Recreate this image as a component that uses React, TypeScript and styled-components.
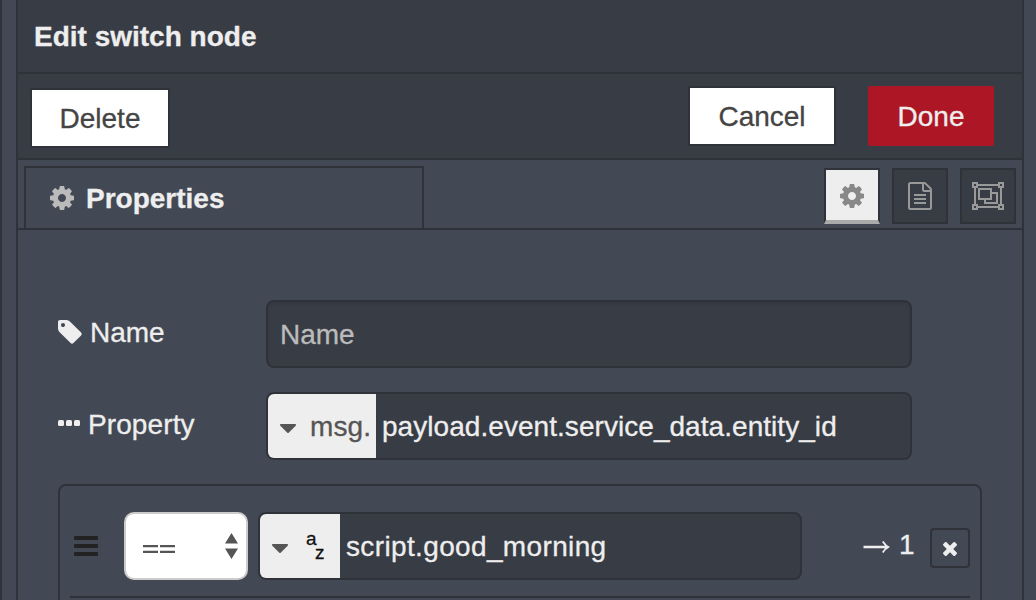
import React from "react";
import styled, { createGlobalStyle } from "styled-components";

const c = {
  dark: "#383c45",
  body: "#434954",
  line: "#2f3239",
  text: "#eeeeee",
  light: "#eeeeee",
  grey: "#555555",
};

const Global = createGlobalStyle`
  * { box-sizing: border-box; }
  html, body { margin: 0; padding: 0; overflow: hidden; }
  body, input, button {
    font-family: "Liberation Sans", Arial, sans-serif;
    font-size: 28px;
    line-height: 40px;
    color: ${c.text};
    -webkit-text-stroke: 0.3px currentColor;
  }
`;

const Page = styled.div`
  display: flex;
  width: 1036px;
  height: 600px;
  overflow: hidden;
  background: ${c.body};
  border-left: 2px solid ${c.line};
  padding-left: 14px;
`;

const Tray = styled.section`
  width: 1008px;
  height: 600px;
  border: solid ${c.line};
  border-width: 0 2px;
  display: flex;
  flex-direction: column;
`;

const Header = styled.header`
  height: 74px;
  flex: none;
  background: ${c.dark};
  border-bottom: 2px solid ${c.line};
  padding: 17px 0 0 16px;
  font-weight: bold;
`;

const Toolbar = styled.div`
  height: 86px;
  flex: none;
  display: flex;
  background: ${c.dark};
  border-bottom: 2px solid ${c.line};
  padding: 12px 28px 0 12px;
`;

const Button = styled.button<{ $w: number; $primary?: boolean; $top?: number }>`
  width: ${(p) => p.$w}px;
  height: 60px;
  flex: none;
  margin: ${(p) => p.$top ?? 0}px 0 0;
  padding: 2px 0 0;
  border: 2px solid ${(p) => (p.$primary ? "#ad1625" : c.line)};
  border-radius: 2px;
  background: ${(p) => (p.$primary ? "#ad1625" : "#ffffff")};
  color: ${(p) => (p.$primary ? c.text : "#444444")};
`;

const Spacer = styled.div`
  flex: 1;
`;

const Gap = styled.div`
  width: 32px;
`;

const TabBar = styled.div`
  height: 70px;
  flex: none;
  display: flex;
  border-bottom: 2px solid ${c.line};
  padding: 6px 6px 0;
`;

const Tab = styled.div`
  width: 400px;
  border: 2px solid ${c.line};
  border-bottom: 0;
  display: flex;
  align-items: center;
  padding: 0 0 0 24px;
  gap: 12px;
  font-weight: bold;
`;

const TabIcons = styled.div`
  display: flex;
  gap: 12px;
  margin: 2px 0 0 auto;
`;

const TabIcon = styled.button<{ $active?: boolean }>`
  width: 56px;
  height: 56px;
  padding: 0;
  display: flex;
  align-items: center;
  justify-content: center;
  color: ${(p) => (p.$active ? "#888888" : "#999999")};
  background: ${(p) => (p.$active ? c.light : c.dark)};
  border: 2px solid ${c.line};
  ${(p) => p.$active && "border-bottom: 4px solid #aaaaaa; padding-top: 2px;"}
`;

const Form = styled.div`
  padding: 70px 40px 0;
  flex: 1;
`;

const Row = styled.div`
  display: flex;
  height: 68px;
  margin-bottom: 24px;
`;

const Label = styled.label`
  width: 208px;
  height: 64px;
  display: flex;
  align-items: center;
  gap: 8px;
`;

const Text = styled.span<{ $spacing?: number }>`
  padding-top: 2px;
  letter-spacing: ${(p) => p.$spacing ?? 0}px;
  white-space: nowrap;
`;

const NameInput = styled.input`
  width: 646px;
  height: 68px;
  padding: 2px 12px 0;
  background: ${c.dark};
  border: 2px solid ${c.line};
  border-radius: 8px;
  box-shadow: inset 0 2px 2px rgba(0, 0, 0, 0.075);
  outline: none;
  &::placeholder { color: #bbbbbb; opacity: 1; }
`;

const TypedInput = styled.div<{ $w: number }>`
  width: ${(p) => p.$w}px;
  height: 68px;
  display: flex;
  align-items: center;
  gap: 6px;
  overflow: hidden;
  background: ${c.dark};
  border: 2px solid ${c.line};
  border-radius: 8px;
`;

const TypeSelect = styled.div<{ $w: number }>`
  width: ${(p) => p.$w}px;
  height: 64px;
  flex: none;
  display: flex;
  align-items: center;
  gap: 14px;
  padding-left: 12px;
  background: ${c.light};
  color: ${c.grey};
`;

const AzIcon = styled.span`
  display: flex;
  margin-left: 4px;
  color: #111111;
  font-size: 19px;
  line-height: 20px;
`;

const AzLetter = styled.span<{ $top: number; $w: number }>`
  padding-top: ${(p) => p.$top}px;
  width: ${(p) => p.$w}px;
  height: 40px;
`;

const RuleList = styled.div`
  width: 924px;
  height: 140px;
  border: 2px solid ${c.line};
  border-radius: 8px;
  padding: 0 10px;
`;

const Rule = styled.div`
  height: 112px;
  border-bottom: 2px solid ${c.line};
  padding: 26px 0 0 4px;
  display: flex;
`;

const Handle = styled.div`
  width: 50px;
  height: 68px;
  display: flex;
  align-items: center;
  color: #222222;
`;

const Operator = styled.div`
  width: 124px;
  height: 68px;
  margin-right: 10px;
  display: flex;
  align-items: center;
  justify-content: space-between;
  padding: 0 8px 0 17px;
  background: #ffffff;
  border: 2px solid #cccccc;
  border-radius: 10px;
  color: ${c.grey};
`;

const Output = styled.div`
  display: flex;
  align-items: center;
  height: 66px;
  margin-left: 61px;
  gap: 8px;
`;

const Remove = styled.button`
  width: 40px;
  height: 40px;
  margin: 16px 0 0 auto;
  padding: 2px 0 0;
  display: flex;
  align-items: center;
  justify-content: center;
  background: transparent;
  border: 2px solid ${c.line};
  border-radius: 4px;
`;

const Svg = styled.svg`
  display: block;
  flex: none;
  fill: currentColor;
`;

const Cog = () => (
  <Svg width="24" height="24" viewBox="128 128 1536 1536">
    <path d="M1152 896q0-106-75-181t-181-75-181 75-75 181 75 181 181 75 181-75 75-181zm512-109v222q0 12-8 23t-20 13l-185 28q-19 54-39 91 35 50 107 138 10 12 10 25t-9 23q-27 37-99 108t-94 71q-12 0-26-9l-138-108q-44 23-91 38-16 136-29 186-7 28-36 28h-222q-14 0-24.5-8.5t-11.5-21.5l-28-184q-49-16-90-37l-141 107q-10 9-25 9-14 0-25-11-126-114-165-168-7-10-7-23 0-12 8-23 15-21 51-66.5t54-70.5q-27-50-41-99l-183-27q-13-2-21-12.5t-8-23.5v-222q0-12 8-23t19-13l186-28q14-46 39-92-40-57-107-138-10-12-10-24 0-10 9-23 26-36 98.5-107.5t94.5-71.5q13 0 26 10l138 107q44-23 91-38 16-136 29-186 7-28 36-28h222q14 0 24.5 8.5t11.5 21.5l28 184q49 16 90 37l142-107q9-9 24-9 13 0 25 10 129 119 165 170 7 8 7 22 0 12-8 23-15 21-51 66.5t-54 70.5q26 50 41 98l183 28q13 2 21 12.5t8 23.5z" />
  </Svg>
);

const TabCog = styled.span`
  color: #bbbbbb;
`;

const Tag = () => (
  <Svg width="24" height="24" viewBox="192 192 1536 1536">
    <path transform="translate(64 64)" d="M576 448q0-53-37.5-90.5t-90.5-37.5-90.5 37.5-37.5 90.5 37.5 90.5 90.5 37.5 90.5-37.5 37.5-90.5zm1067 576q0 53-37 90l-491 492q-39 37-91 37-53 0-90-37l-715-716q-38-37-64.5-101t-26.500-117v-416q0-52 38-90t90-38h416q53 0 117 26.500t102 64.500l715 714q37 39 37 91z" />
  </Svg>
);

const DotsSvg = styled(Svg)`
  margin-top: -2px;
`;

const Dots = () => (
  <DotsSvg width="22" height="6" viewBox="0 0 22 6">
    <rect width="6" height="6" rx="1.5" />
    <rect x="8" width="6" height="6" rx="1.5" />
    <rect x="16" width="6" height="6" rx="1.5" />
  </DotsSvg>
);

const Bars = () => (
  <Svg width="24" height="20" viewBox="0 0 24 20">
    <rect width="24" height="4" rx="1" />
    <rect y="8" width="24" height="4" rx="1" />
    <rect y="16" width="24" height="4" rx="1" />
  </Svg>
);

const CaretSvg = styled(Svg)`
  margin-top: 5px;
`;

const Caret = () => (
  <CaretSvg width="16" height="9" viewBox="384 640 1024 576">
    <path d="M1408 704q0 26-19 45l-448 448q-19 19-45 19t-45-19l-448-448q-19-19-19-45t19-45 45-19h896q26 0 45 19t19 45z" />
  </CaretSvg>
);

const StrokeSvg = styled.svg`
  display: block;
  flex: none;
  fill: none;
  stroke: currentColor;
  stroke-width: 2;
`;

const FileText = () => (
  <StrokeSvg width="24" height="28" viewBox="0 0 24 28">
    <path d="M2.500 1H16.200Q17 1 17.600 1.600L22.300 6.300Q23 7 23 8V25.500Q23 27 21.500 27H2.500Q1 27 1 25.500V2.500Q1 1 2.500 1Z" />
    <path d="M15 1V7.500Q15 9 16.500 9H23" />
    <path d="M6 13H18M6 17H18M6 21H18" />
  </StrokeSvg>
);

const ObjectGroup = () => (
  <StrokeSvg width="32" height="28" viewBox="0 0 32 28">
    <path d="M6 3H26M6 25H26M3 6V22M29 6V22" />
    <rect x="1" y="1" width="4" height="4" />
    <rect x="27" y="1" width="4" height="4" />
    <rect x="1" y="23" width="4" height="4" />
    <rect x="27" y="23" width="4" height="4" />
    <rect x="7" y="7" width="12" height="10" />
    <path d="M19 11H25V21H13V17" />
  </StrokeSvg>
);

const UpDown = () => (
  <Svg width="13" height="26" viewBox="0 0 13 26">
    <path d="M6.500 0L13 10.500H0ZM0 15.500H13L6.500 26Z" />
  </Svg>
);

const EqualsSvg = styled(Svg)`
  margin-top: 6px;
`;

const Equals = () => (
  <EqualsSvg width="32" height="8" viewBox="0 0 32 8">
    <path d="M0 0H15V2.300H0ZM17 0H32V2.300H17ZM0 5.700H15V8H0ZM17 5.700H32V8H17Z" />
  </EqualsSvg>
);

const ArrowSvg = styled(Svg)`
  margin-top: 3px;
`;

const Arrow = () => (
  <ArrowSvg width="27" height="12" viewBox="0 0 27 12">
    <path d="M0.500 4.800H22L19 1L20.500 0Q23 4 27 6Q23 8 20.500 12L19 11L22 7.200H0.500Z" />
  </ArrowSvg>
);

const Digit = styled.span`
  padding-left: 1px;
`;

const Times = () => (
  <Svg width="14" height="14" viewBox="302 334 1188 1188">
    <path transform="translate(0 -32)" d="M1490 1322q0 40-28 68l-136 136q-28 28-68 28t-68-28l-294-294-294 294q-28 28-68 28t-68-28l-136-136q-28-28-28-68t28-68l294-294-294-294q-28-28-28-68t28-68l136-136q28-28 68-28t68 28l294 294 294-294q28-28 68-28t68 28l136 136q28 28 28 68t-28 68l-294 294 294 294q28 28 28 68z" />
  </Svg>
);

export default function App() {
  return (
    <>
      <Global />
      <Page>
        <Tray>
          <Header>Edit switch node</Header>
          <Toolbar>
            <Button $w={140} $top={2}>Delete</Button>
            <Spacer />
            <Button $w={148}>Cancel</Button>
            <Gap />
            <Button $w={126} $primary>Done</Button>
          </Toolbar>
          <TabBar>
            <Tab>
              <TabCog><Cog /></TabCog>
              <Text>Properties</Text>
            </Tab>
            <TabIcons>
              <TabIcon $active aria-label="Properties"><Cog /></TabIcon>
              <TabIcon aria-label="Description"><FileText /></TabIcon>
              <TabIcon aria-label="Appearance"><ObjectGroup /></TabIcon>
            </TabIcons>
          </TabBar>
          <Form>
            <Row>
              <Label><Tag /><Text>Name</Text></Label>
              <NameInput placeholder="Name" />
            </Row>
            <Row>
              <Label><Dots /><Text $spacing={0.1}>Property</Text></Label>
              <TypedInput $w={646}>
                <TypeSelect $w={108}><Caret /><Text $spacing={0.1}>msg.</Text></TypeSelect>
                <Text $spacing={0.05}>payload.event.service_data.entity_id</Text>
              </TypedInput>
            </Row>
            <RuleList>
              <Rule>
                <Handle><Bars /></Handle>
                <Operator><Equals /><UpDown /></Operator>
                <TypedInput $w={544}>
                  <TypeSelect $w={80}>
                    <Caret />
                    <AzIcon><AzLetter $top={3} $w={9}>a</AzLetter><AzLetter $top={17} $w={12}>z</AzLetter></AzIcon>
                  </TypeSelect>
                  <Text $spacing={0.36}>script.good_morning</Text>
                </TypedInput>
                <Output><Arrow /><Digit>1</Digit></Output>
                <Remove aria-label="Remove"><Times /></Remove>
              </Rule>
            </RuleList>
          </Form>
        </Tray>
      </Page>
    </>
  );
}
